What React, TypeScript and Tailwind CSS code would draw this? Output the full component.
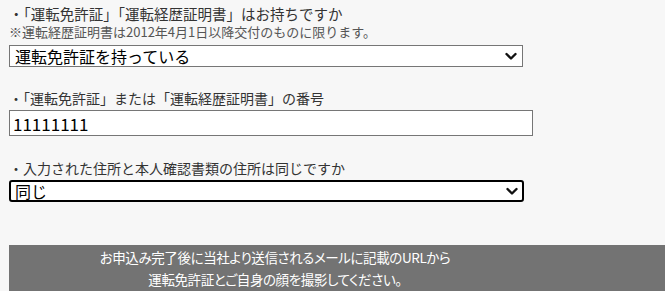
import { useState } from 'react';

const jp = "font-['Noto_Sans_CJK_JP','Noto_Sans',sans-serif]";

function Chevron() {
  return (
    <svg
      className="pointer-events-none absolute right-[5px] top-1/2 h-[10px] w-[14px] -translate-y-1/2"
      viewBox="0 0 14 10"
      fill="none"
      stroke="#111"
      strokeWidth="2.4"
      strokeLinecap="round"
      strokeLinejoin="round"
    >
      <path d="M2.5 3l4.5 4.5L11.5 3" />
    </svg>
  );
}

export default function App() {
  const [license, setLicense] = useState('has');
  const [num, setNum] = useState('11111111');
  const [same, setSame] = useState('same');

  return (
    <div className={`min-h-screen bg-[#f7f7f7] pt-[4px] text-[#333] ${jp}`}>
      <div className="pl-[9px]">
        <p className="text-[14.5px] leading-[20px]">・「運転免許証」「運転経歴証明書」はお持ちですか</p>
        <p className="text-[13px] leading-[16px] text-[#555]">
          ※運転経歴証明書は2012年4月1日以降交付のものに限ります。
        </p>
        <div className="relative mt-[5px] w-[514px]">
          <select
            value={license}
            onChange={(e) => setLicense(e.target.value)}
            className="block h-[22px] w-full appearance-none border border-[#767676] bg-white pl-[5px] text-[16px] leading-[20px] text-black"
          >
            <option value="has">運転免許証を持っている</option>
            <option value="none">持っていない</option>
          </select>
          <Chevron />
        </div>

        <p className="mt-[21px] text-[14px] leading-[20px]">・「運転免許証」または「運転経歴証明書」の番号</p>
        <input
          value={num}
          onChange={(e) => setNum(e.target.value)}
          className="mt-[2px] block h-[26px] w-[524px] border border-[#767676] bg-white px-[3px] text-[17px] leading-[24px] text-black outline-none"
        />

        <p className="mt-[22px] text-[14px] leading-[20px]">・入力された住所と本人確認書類の住所は同じですか</p>
        <div className="relative mt-[2px] w-[515px]">
          <select
            value={same}
            onChange={(e) => setSame(e.target.value)}
            className="block h-[22px] w-full appearance-none rounded-[3px] border-2 border-black bg-white pl-[4px] text-[16px] leading-[18px] text-black"
          >
            <option value="same">同じ</option>
            <option value="diff">異なる</option>
          </select>
          <Chevron />
        </div>
      </div>

      <div className="ml-[9px] mt-[43px] bg-[#737373] pb-[4px] text-white">
        <div className="w-[532px] pt-[1px] text-center text-[13.5px] leading-[22px] tracking-[-0.4px] [font-feature-settings:'palt']">
          <p>お申込み完了後に当社より送信されるメールに記載のURLから</p>
          <p>運転免許証とご自身の顔を撮影してください。</p>
        </div>
      </div>
    </div>
  );
}
